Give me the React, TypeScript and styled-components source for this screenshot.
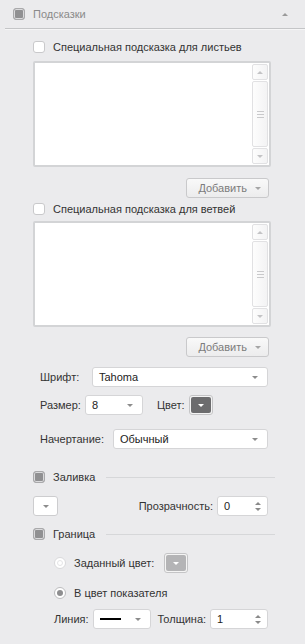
import styled, { createGlobalStyle } from 'styled-components';

const GlobalStyle = createGlobalStyle`
  html, body {
    margin: 0;
    padding: 0;
    background: #ebebed;
  }
  body {
    font-family: 'Liberation Sans', Arial, sans-serif;
    font-size: 11px;
    color: #333;
  }
`;

const Panel = styled.div`
  width: 305px;
  height: 644px;
  background: #ebebed;
  overflow: hidden;
`;

const Header = styled.div`
  height: 28px;
  margin-left: 5px;
  padding: 0 17px 0 8px;
  display: flex;
  align-items: center;
  gap: 8px;
  border-bottom: 1px solid #c4c5c7;
  box-shadow: 0 1px 0 #f5f5f6;
`;

const Title = styled.span`
  flex: 1;
  color: #8a8a8a;
  font-size: 11px;
`;

const Caret = styled.span<{ up?: boolean; color?: string }>`
  width: 0;
  height: 0;
  border-left: 3px solid transparent;
  border-right: 3px solid transparent;
  ${({ up, color }) =>
    up
      ? `border-bottom: 3px solid ${color || '#9a9a9a'};`
      : `border-top: 3px solid ${color || '#8c8c8c'};`}
`;

const Content = styled.div`
  padding: 0 34px 0 33px;
  display: flex;
  flex-direction: column;
`;

const Box = styled.span<{ filled?: boolean }>`
  flex: none;
  width: 12px;
  height: 12px;
  box-sizing: border-box;
  border-radius: 3px;
  border: 1px solid ${({ filled }) => (filled ? '#a9a9ab' : '#c9c9cb')};
  background: ${({ filled }) => (filled ? '#909092' : '#fff')};
  box-shadow: ${({ filled }) => (filled ? 'inset 0 0 0 1px #dadadc' : 'none')};
`;

const CheckRow = styled.div<{ mt: number }>`
  display: flex;
  align-items: center;
  gap: 8px;
  height: 12px;
  margin-top: ${({ mt }) => mt}px;
  white-space: nowrap;
`;

const SectionLine = styled.span`
  flex: 1;
  height: 1px;
  margin: 0 -4px 0 3px;
  background: #d6d7d9;
`;

const ListBox = styled.div<{ mt: number }>`
  margin-top: ${({ mt }) => mt}px;
  height: 106px;
  box-sizing: border-box;
  border: 2px solid #d3d4d6;
  border-radius: 2px;
  background: #fff;
  display: flex;
  justify-content: flex-end;
  padding: 1px 1px 1px 0;
`;

const ScrollBar = styled.div`
  width: 16px;
  display: flex;
  flex-direction: column;
  gap: 1px;
`;

const ScrollPart = styled.div<{ grow?: boolean }>`
  box-sizing: border-box;
  height: ${({ grow }) => (grow ? 'auto' : '16px')};
  flex: ${({ grow }) => (grow ? 1 : 'none')};
  border: 1px solid #e1e1e3;
  border-radius: 2px;
  background: linear-gradient(to right, #fdfdfd, #f3f3f4);
  display: flex;
  align-items: center;
  justify-content: center;
`;

const Grip = styled.span`
  width: 7px;
  height: 7px;
  background: repeating-linear-gradient(
    to bottom,
    #c9c9cb 0,
    #c9c9cb 1px,
    transparent 1px,
    transparent 3px
  );
`;

const ButtonRow = styled.div<{ mt: number }>`
  display: flex;
  justify-content: flex-end;
  margin-top: ${({ mt }) => mt}px;
  padding-right: 2px;
`;

const AddButton = styled.div`
  width: 83px;
  height: 20px;
  box-sizing: border-box;
  border: 1px solid #c9c9cb;
  border-radius: 3px;
  background: linear-gradient(to bottom, #f9f9f9, #ececed);
  color: #7c7c7c;
  font-size: 11px;
  display: flex;
  align-items: center;
  justify-content: flex-end;
  gap: 8px;
  padding-right: 7px;
`;

const FieldRow = styled.div<{ mt: number; indent?: number }>`
  display: flex;
  align-items: center;
  height: 20px;
  margin-top: ${({ mt }) => mt}px;
  padding-left: ${({ indent }) => indent ?? 7}px;
  padding-right: 3px;
  white-space: nowrap;
`;

const Label = styled.span<{ w?: number; ml?: number }>`
  width: ${({ w }) => (w ? `${w}px` : 'auto')};
  margin-left: ${({ ml }) => ml ?? 0}px;
  margin-right: 4px;
  color: #333;
`;

const Select = styled.div<{ w?: number }>`
  box-sizing: border-box;
  height: 20px;
  ${({ w }) => (w ? `width: ${w}px;` : 'flex: 1;')}
  border: 1px solid #d5d5d7;
  border-radius: 3px;
  background: #fff;
  display: flex;
  align-items: center;
  padding: 0 9px 0 6px;
  color: #222;
`;

const SelectText = styled.span`
  flex: 1;
`;

const LineSample = styled.span`
  flex: 1;
  margin-right: 14px;
  height: 2px;
  background: #000;
`;

const ColorButton = styled.div`
  box-sizing: border-box;
  width: 24px;
  height: 20px;
  border: 1px solid #c4c4c6;
  border-radius: 3px;
  background: #f4f4f4;
  padding: 1px;
  display: flex;
`;

const ColorSwatch = styled.div<{ fill: string }>`
  flex: 1;
  border-radius: 2px;
  background: ${({ fill }) => fill};
  display: flex;
  align-items: center;
  justify-content: center;
`;

const SmallDrop = styled.div`
  box-sizing: border-box;
  width: 25px;
  height: 20px;
  border: 1px solid #cdcdcf;
  border-radius: 3px;
  background: #fff;
  display: flex;
  align-items: center;
  justify-content: center;
`;

const Spacer = styled.span`
  flex: 1;
`;

const Spinner = styled.div<{ w: number }>`
  box-sizing: border-box;
  width: ${({ w }) => w}px;
  height: 20px;
  border: 1px solid #d5d5d7;
  border-radius: 3px;
  background: #fff;
  display: flex;
  align-items: center;
  padding: 0 6px 0 6px;
  color: #222;
`;

const Arrows = styled.span`
  display: flex;
  flex-direction: column;
  gap: 3px;
`;

const RadioRow = styled.div<{ mt: number }>`
  display: flex;
  align-items: center;
  height: 20px;
  margin-top: ${({ mt }) => mt}px;
  padding-left: 21px;
  gap: 8px;
  white-space: nowrap;
`;

const Radio = styled.span<{ checked?: boolean; faded?: boolean }>`
  flex: none;
  width: 12px;
  height: 12px;
  box-sizing: border-box;
  border-radius: 50%;
  border: 1px solid ${({ faded }) => (faded ? '#d9d9db' : '#bcbcbe')};
  background: #fff;
  display: flex;
  align-items: center;
  justify-content: center;
  &::after {
    content: '';
    width: 6px;
    height: 6px;
    border-radius: 50%;
    background: ${({ checked }) => (checked ? '#8e8e90' : 'transparent')};
    border: ${({ faded }) => (faded ? '1px solid #e4e4e6' : 'none')};
    box-sizing: border-box;
  }
`;

const RadioLabel = styled.span`
  margin-right: 2px;
`;

const ListField = ({ mt }: { mt: number }) => (
  <ListBox mt={mt}>
    <ScrollBar>
      <ScrollPart>
        <Caret up color="#c3c3c5" />
      </ScrollPart>
      <ScrollPart grow>
        <Grip />
      </ScrollPart>
      <ScrollPart>
        <Caret color="#c3c3c5" />
      </ScrollPart>
    </ScrollBar>
  </ListBox>
);

const Add = ({ mt }: { mt: number }) => (
  <ButtonRow mt={mt}>
    <AddButton>
      Добавить
      <Caret color="#a5a5a5" />
    </AddButton>
  </ButtonRow>
);

const SpinArrows = () => (
  <Arrows>
    <Caret up color="#8a8a8a" />
    <Caret color="#8a8a8a" />
  </Arrows>
);

const App = () => {
  return (
    <Panel>
      <GlobalStyle />
      <Header>
        <Box filled />
        <Title>Подсказки</Title>
        <Caret up />
      </Header>
      <Content>
        <CheckRow mt={12}>
          <Box />
          <span>Специальная подсказка для листьев</span>
        </CheckRow>
        <ListField mt={8} />
        <Add mt={11} />
        <CheckRow mt={5}>
          <Box />
          <span>Специальная подсказка для ветвей</span>
        </CheckRow>
        <ListField mt={6} />
        <Add mt={10} />

        <FieldRow mt={10}>
          <Label w={48}>Шрифт:</Label>
          <Select>
            <SelectText>Tahoma</SelectText>
            <Caret />
          </Select>
        </FieldRow>
        <FieldRow mt={8}>
          <Label>Размер:</Label>
          <Select w={58}>
            <SelectText>8</SelectText>
            <Caret />
          </Select>
          <Label ml={14}>Цвет:</Label>
          <ColorButton>
            <ColorSwatch fill="#6c6c6e">
              <Caret color="#fff" />
            </ColorSwatch>
          </ColorButton>
        </FieldRow>
        <FieldRow mt={14}>
          <Label w={69}>Начертание:</Label>
          <Select>
            <SelectText>Обычный</SelectText>
            <Caret />
          </Select>
        </FieldRow>

        <CheckRow mt={22}>
          <Box filled />
          <span>Заливка</span>
          <SectionLine />
        </CheckRow>
        <FieldRow mt={13} indent={0}>
          <SmallDrop>
            <Caret />
          </SmallDrop>
          <Spacer />
          <Label>Прозрачность:</Label>
          <Spinner w={51}>
            <SelectText>0</SelectText>
            <SpinArrows />
          </Spinner>
        </FieldRow>

        <CheckRow mt={12}>
          <Box filled />
          <span>Граница</span>
          <SectionLine />
        </CheckRow>
        <RadioRow mt={13}>
          <Radio faded />
          <RadioLabel>Заданный цвет:</RadioLabel>
          <ColorButton>
            <ColorSwatch fill="#b4b4b6">
              <Caret color="#fff" />
            </ColorSwatch>
          </ColorButton>
        </RadioRow>
        <RadioRow mt={10}>
          <Radio checked />
          <RadioLabel>В цвет показателя</RadioLabel>
        </RadioRow>
        <FieldRow mt={6} indent={21}>
          <Label>Линия:</Label>
          <Select w={58}>
            <LineSample />
            <Caret />
          </Select>
          <Label ml={7}>Толщина:</Label>
          <Spinner w={58}>
            <SelectText>1</SelectText>
            <SpinArrows />
          </Spinner>
        </FieldRow>
      </Content>
    </Panel>
  );
};

export default App;
